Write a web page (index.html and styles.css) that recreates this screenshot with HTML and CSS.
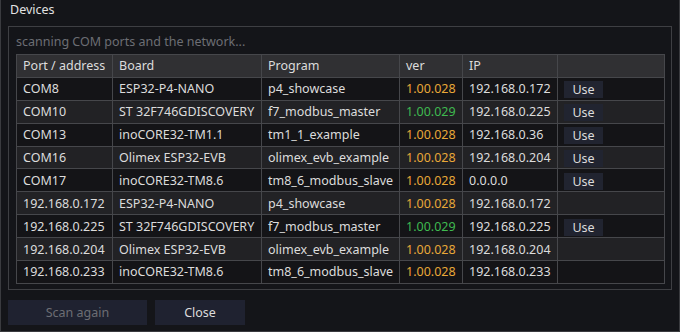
FILE: index.html
```html
<!DOCTYPE html>
<html>
<head>
<meta charset="utf-8">
<link rel="stylesheet" href="styles.css">
</head>
<body>
<div class="window">
  <div class="title">Devices</div>
  <div class="frame">
    <div class="status">scanning COM ports and the network...</div>
    <table class="devices">
      <colgroup>
        <col class="c-port"><col class="c-board"><col class="c-prog"><col class="c-ver"><col class="c-ip"><col class="c-act">
      </colgroup>
      <thead>
        <tr><th>Port / address</th><th>Board</th><th>Program</th><th>ver</th><th>IP</th><th></th></tr>
      </thead>
      <tbody>
        <tr><td>COM8</td><td>ESP32-P4-NANO</td><td>p4_showcase</td><td class="old">1.00.028</td><td>192.168.0.172</td><td><span class="use">Use</span></td></tr>
        <tr><td>COM10</td><td>ST 32F746GDISCOVERY</td><td>f7_modbus_master</td><td class="new">1.00.029</td><td>192.168.0.225</td><td><span class="use">Use</span></td></tr>
        <tr><td>COM13</td><td>inoCORE32-TM1.1</td><td>tm1_1_example</td><td class="old">1.00.028</td><td>192.168.0.36</td><td><span class="use">Use</span></td></tr>
        <tr><td>COM16</td><td>Olimex ESP32-EVB</td><td>olimex_evb_example</td><td class="old">1.00.028</td><td>192.168.0.204</td><td><span class="use">Use</span></td></tr>
        <tr><td>COM17</td><td>inoCORE32-TM8.6</td><td>tm8_6_modbus_slave</td><td class="old">1.00.028</td><td>0.0.0.0</td><td><span class="use">Use</span></td></tr>
        <tr><td>192.168.0.172</td><td>ESP32-P4-NANO</td><td>p4_showcase</td><td class="old">1.00.028</td><td>192.168.0.172</td><td></td></tr>
        <tr><td>192.168.0.225</td><td>ST 32F746GDISCOVERY</td><td>f7_modbus_master</td><td class="new">1.00.029</td><td>192.168.0.225</td><td><span class="use">Use</span></td></tr>
        <tr><td>192.168.0.204</td><td>Olimex ESP32-EVB</td><td>olimex_evb_example</td><td class="old">1.00.028</td><td>192.168.0.204</td><td></td></tr>
        <tr><td>192.168.0.233</td><td>inoCORE32-TM8.6</td><td>tm8_6_modbus_slave</td><td class="old">1.00.028</td><td>192.168.0.233</td><td></td></tr>
      </tbody>
    </table>
  </div>
  <div class="actions">
    <button class="btn btn-scan" disabled>Scan again</button>
    <button class="btn btn-close">Close</button>
  </div>
</div>
</body>
</html>
```

FILE: styles.css
```css
html, body {
  margin: 0;
  padding: 0;
  background: #141519;
}
body {
  width: 680px;
  height: 332px;
  font-family: "Noto Sans", "Open Sans", sans-serif;
  font-size: 12.5px;
  color: #dcdcdc;
}
.window {
  box-sizing: border-box;
  width: 680px;
  height: 332px;
  border: 1px solid #3a3b3f;
  border-top: none;
  background: #141519;
  display: flex;
  flex-direction: column;
}
.title {
  height: 26px;
  line-height: 20px;
  padding-left: 9px;
  color: #e2e2e2;
}
.frame {
  margin: 0 7px 0 7px;
  height: 264px;
  box-sizing: border-box;
  border: 1px solid #3e3f43;
  padding: 0 7px;
}
.status {
  height: 27px;
  line-height: 30px;
  color: #6c6e74;
}
.devices {
  width: 648px;
  table-layout: fixed;
  border-collapse: collapse;
  border: 1px solid #505156;
}
.c-port { width: 96px; }
.c-board { width: 149px; }
.c-prog { width: 138px; }
.c-ver { width: 63px; }
.c-ip { width: 95px; }
.c-act { width: 107px; }
.devices th, .devices td {
  border: 1px solid #46474b;
  height: 21.9px;
  padding: 0 0 0 6px;
  text-align: left;
  font-weight: normal;
  white-space: nowrap;
  overflow: hidden;
  line-height: 21px;
}
.devices th {
  background: #303033;
  color: #dcdcdc;
}
.devices tbody tr:nth-child(odd) td { background: #141417; }
.devices tbody tr:nth-child(even) td { background: #222225; }
.old { color: #e8a838; }
.new { color: #3fb950; }
.use {
  display: inline-block;
  width: 39px;
  height: 17px;
  line-height: 17px;
  text-align: center;
  background: #212430;
  color: #dcdcdc;
  vertical-align: middle;
}
.actions {
  display: flex;
  gap: 8px;
  padding: 10px 7px 0 7px;
}
.btn {
  font-family: inherit;
  font-size: 12.5px;
  height: 25px;
  border: none;
  padding: 0;
  background: #1f2230;
  color: #dcdcdc;
}
.btn-scan { width: 139px; color: #6c6e74; }
.btn-close { width: 90px; }
```
